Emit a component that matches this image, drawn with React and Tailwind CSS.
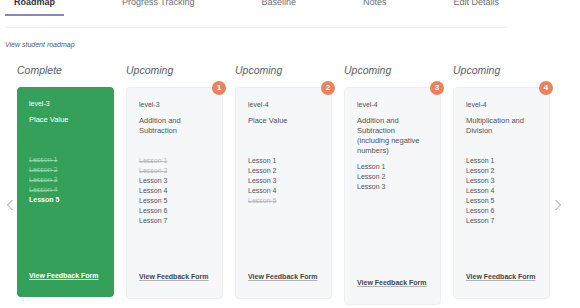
import React from 'react';

const tabs = ['Roadmap', 'Progress Tracking', 'Baseline', 'Notes', 'Edit Details'];

const columns = [
  { status: 'Complete', level: 'level-3', title: 'Place Value', lessons: 5, done: 4, complete: true },
  { status: 'Upcoming', level: 'level-3', title: 'Addition and Subtraction', lessons: 7, done: 2, badge: 1 },
  { status: 'Upcoming', level: 'level-4', title: 'Place Value', lessons: 5, struck: [5], badge: 2 },
  { status: 'Upcoming', level: 'level-4', title: 'Addition and Subtraction (including negative numbers)', lessons: 3, badge: 3 },
  { status: 'Upcoming', level: 'level-4', title: 'Multiplication and Division', lessons: 7, badge: 4 },
];

const Chevron = ({ dir }) => (
  <svg width="8" height="12" viewBox="0 0 8 12" fill="none">
    <polyline points={dir === 'left' ? '6.5,1 1.5,6 6.5,11' : '1.5,1 6.5,6 1.5,11'} stroke="#9a9a9a" strokeWidth="1" />
  </svg>
);

const Card = ({ col }) => {
  const isStruck = (n) => (col.done && n <= col.done) || (col.struck && col.struck.includes(n));
  return (
    <div className={`relative w-[97px] rounded-[4px] px-[12px] pt-[12px] pb-[16px] ${col.complete ? 'bg-[#35a05a] text-white' : 'bg-[#f6f7f9] border border-[#eceef1] text-[#50555c]'}`}>
      {col.badge && (
        <div className="absolute -top-[7px] -right-[4px] w-[14px] h-[14px] rounded-full bg-[#e8825f] text-white text-[8px] font-bold flex items-center justify-center">
          {col.badge}
        </div>
      )}
      <div className="text-[7px] leading-[10px] mb-[6px]">{col.level}</div>
      <div className="text-[7.5px] leading-[10px] min-h-[34px] mb-[6px]">{col.title}</div>
      <div className="min-h-[116px]">
        {Array.from({ length: col.lessons }, (_, i) => i + 1).map((n) => (
          <div
            key={n}
            className={`text-[7px] leading-[10px] ${isStruck(n) ? (col.complete ? 'line-through text-[#8fd6a4]' : 'line-through text-[#b6bac0]') : col.complete ? 'font-semibold text-white' : ''}`}
          >
            Lesson {n}
          </div>
        ))}
      </div>
      <div className={`text-[7px] leading-[10px] font-bold underline ${col.complete ? 'text-white decoration-[#cfe9d6]' : 'text-[#3f444a] decoration-[#b0b4ba]'}`}>
        View Feedback Form
      </div>
    </div>
  );
};

const App = () => {
  return (
    <div className="w-[580px] h-[308px] overflow-hidden bg-white" style={{ fontFamily: '"Liberation Sans", Arial, sans-serif' }}>
      <div className="flex gap-[49px] ml-[5px] -mt-[4px]">
        {tabs.map((t, i) => (
          <div
            key={t}
            className={`px-[9px] pb-[6px] text-[9px] leading-[12px] ${i === 0 ? 'font-bold text-[#2f3140] border-b-2 border-[#8b85c1]' : 'text-[#6b6e75] border-b-2 border-transparent'}`}
          >
            {t}
          </div>
        ))}
      </div>
      <div className="ml-[5px] w-[501px] h-px bg-[#efefef] mt-[11px]" />
      <div className="ml-[5px] mt-[13px] text-[7px] leading-[8px] italic text-[#555a60]">View student roadmap</div>
      <div className="flex items-start mt-[15px]">
        <div className="w-[17px] flex justify-center pt-[135px] pl-[3px]">
          <Chevron dir="left" />
        </div>
        <div className="flex gap-[12px] items-start">
          {columns.map((col, i) => (
            <div key={i} className="flex flex-col">
              <div className="text-[10.5px] leading-[13px] italic text-[#5a5e66] mb-[10px]">{col.status}</div>
              <Card col={col} />
            </div>
          ))}
        </div>
        <div className="ml-[4px] pt-[135px]">
          <Chevron dir="right" />
        </div>
      </div>
    </div>
  );
};

export default App;
